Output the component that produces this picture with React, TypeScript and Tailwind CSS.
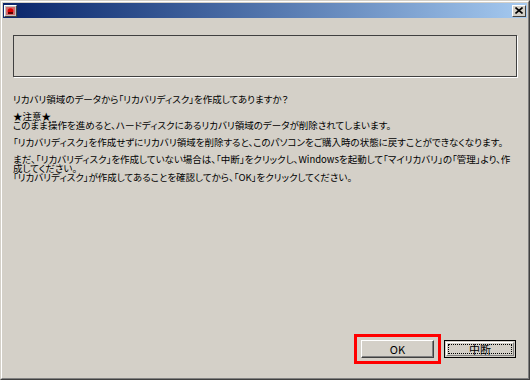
import React from "react";

export default function App() {
  const font = {
    fontFamily: '"MS UI Gothic", "Noto Sans CJK JP", sans-serif',
  };
  return (
    <div className="w-[530px] h-[380px] bg-[#d4d0c8] border border-t-[#d4d0c8] border-l-[#d4d0c8] border-r-[#404040] border-b-[#404040] overflow-hidden">
      <div className="w-full h-full border border-t-white border-l-white border-r-[#808080] border-b-[#808080] flex flex-col p-[1px]">
        {/* title bar */}
        <div className="h-[15px] bg-gradient-to-r from-[#0a246a] to-[#a6caf0] flex items-center justify-between pl-[1px] pr-[1px]">
          <div className="w-[13px] h-[12px] bg-[#c0c0c0] border border-t-white border-l-white border-r-[#404040] border-b-[#404040] flex items-center justify-center">
            <svg width="9" height="8" viewBox="0 0 9 8">
              <rect x="0" y="0" width="9" height="8" fill="#d46a6a" />
              <circle cx="4.5" cy="4" r="2.8" fill="#e00000" />
              <rect x="2" y="5" width="5" height="2" fill="#600000" />
            </svg>
          </div>
          <div className="w-[14px] h-[12px] bg-[#d4d0c8] border border-t-white border-l-white border-r-[#404040] border-b-[#404040] flex items-center justify-center">
            <svg width="8" height="7" viewBox="0 0 8 7">
              <path d="M0.5 0.5 L7.5 6.5 M7.5 0.5 L0.5 6.5" stroke="#000" strokeWidth="1.6" />
            </svg>
          </div>
        </div>

        {/* body */}
        <div className="flex-1 flex flex-col px-[10px] pt-[17px]">
          <div className="h-[42px] border border-[#404040] shadow-[1px_1px_0_#ffffff]" />

          <div
            className="mt-[18px] text-[9.5px] leading-[9px] text-black flex flex-col gap-[8px] whitespace-nowrap [font-feature-settings:'palt']"
            style={font}
          >
            <p>リカバリ領域のデータから「リカバリディスク」を作成してありますか？</p>
            <p>
              ★注意★
              <br />
              このまま操作を進めると、ハードディスクにあるリカバリ領域のデータが削除されてしまいます。
            </p>
            <p>「リカバリディスク」を作成せずにリカバリ領域を削除すると、このパソコンをご購入時の状態に戻すことができなくなります。</p>
            <p>
              まだ、「リカバリディスク」を作成していない場合は、「中断」をクリックし、Windowsを起動して「マイリカバリ」の「管理」より、作
              <br />
              成してください。
              <br />
              「リカバリディスク」が作成してあることを確認してから、「OK」をクリックしてください。
            </p>
          </div>

          <div className="flex-1" />

          <div className="flex justify-end items-center gap-[3px] pb-[13px] pr-[1px]">
            <div className="border-[3px] border-[#ff0000] p-[3px] px-[4px]">
              <button
                className="w-[73px] h-[18px] bg-[#d4d0c8] border border-t-white border-l-white border-r-[#404040] border-b-[#404040] shadow-[inset_-1px_-1px_0_#808080] text-[11px] leading-none text-black flex items-center justify-center"
                style={font}
              >
                OK
              </button>
            </div>
            <button
              className="w-[72px] h-[18px] bg-[#d4d0c8] border border-black p-[1px] text-[11px] leading-none text-black"
              style={font}
            >
              <div className="w-full h-full border border-t-white border-l-white border-r-[#808080] border-b-[#808080] p-[1px]">
                <div className="w-full h-full border border-dotted border-black flex items-center justify-center">
                  中断
                </div>
              </div>
            </button>
          </div>
        </div>
      </div>
    </div>
  );
}
